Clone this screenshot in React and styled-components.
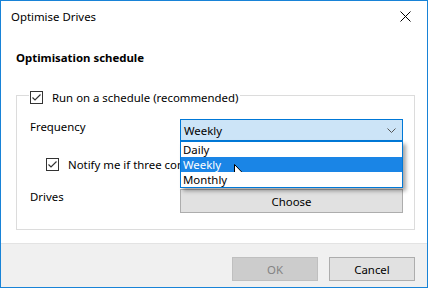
import React from 'react';
import styled, { createGlobalStyle } from 'styled-components';

const GlobalStyle = createGlobalStyle`
    html, body {
        margin: 0;
        padding: 0;
        background: #ffffff;
    }
    body {
        font-family: "Segoe UI", "Noto Sans", "Liberation Sans", sans-serif;
        font-size: 11.4px;
        color: #000000;
    }
`;

const Window = styled.div`
    box-sizing: border-box;
    width: 428px;
    height: 288px;
    border: 1px solid #1883d7;
    display: flex;
    flex-direction: column;
    background: #ffffff;
    overflow: hidden;
`;

const TitleBar = styled.div`
    height: 30px;
    display: flex;
    align-items: center;
    justify-content: space-between;
    padding: 0 16px 0 10px;
`;

const Title = styled.span`
    color: #000000;
`;

const CloseButton = styled.span`
    display: flex;
    align-items: center;
    justify-content: center;
    width: 12px;
    height: 12px;
`;

const Content = styled.div`
    flex: 1;
    padding: 19px 12px 0 15px;
`;

const Heading = styled.div`
    font-weight: bold;
    line-height: 16px;
    margin-bottom: 19px;
`;

const GroupBox = styled.fieldset`
    margin: 0;
    border: 1px solid #dcdcdc;
    padding: 0 11px 16px 13px;
`;

const Legend = styled.legend`
    padding: 4px 2px 0 1px;
    margin-left: -1px;
    line-height: 17px;
`;

const CheckLabel = styled.label`
    display: flex;
    align-items: center;
    gap: 9px;
    padding-left: ${p => p.indent || 0}px;
`;

const Box = styled.span`
    box-sizing: border-box;
    width: 13px;
    height: 13px;
    border: 1px solid #333333;
    background: #ffffff;
    display: flex;
    align-items: center;
    justify-content: center;
`;

const Row = styled.div`
    display: grid;
    grid-template-columns: 150px 1fr;
    align-items: center;
    margin-top: ${p => p.gap}px;
    height: ${p => p.h}px;
    position: relative;
`;

const Label = styled.span`
    line-height: 17px;
    margin-top: ${p => p.offset || 0}px;
`;

const Select = styled.div`
    box-sizing: border-box;
    height: 22px;
    border: 1px solid #0078d7;
    background: #cce4f7;
    display: flex;
    align-items: center;
    justify-content: space-between;
    padding: 0 6px 0 3px;
    position: relative;
`;

const Options = styled.ul`
    position: absolute;
    top: 21px;
    left: -1px;
    right: -1px;
    margin: 0;
    padding: 0;
    list-style: none;
    box-sizing: border-box;
    border: 1px solid #0078d7;
    background: #ffffff;
    box-shadow: 3px 3px 4px rgba(0, 0, 0, 0.35);
    z-index: 2;
`;

const Option = styled.li`
    height: 15px;
    line-height: 15px;
    padding-left: 2px;
    background: ${p => (p.selected ? '#1a85e6' : '#ffffff')};
    color: ${p => (p.selected ? '#ffffff' : '#000000')};
    position: relative;
`;

const Pointer = styled.svg`
    position: absolute;
    left: 53px;
    top: 7px;
`;

const Button = styled.button`
    box-sizing: border-box;
    font-family: inherit;
    font-size: 11.4px;
    height: 24px;
    width: ${p => (p.w ? `${p.w}px` : '100%')};
    border: 1px solid ${p => (p.disabled ? '#bfbfbf' : '#adadad')};
    background: ${p => (p.disabled ? '#cccccc' : '#e1e1e1')};
    color: ${p => (p.disabled ? '#838383' : '#000000')};
    padding: 0;
    margin: 0;
`;

const Footer = styled.div`
    box-sizing: border-box;
    height: 44px;
    flex-shrink: 0;
    border-top: 1px solid #e3e3e3;
    background: #f0f0f0;
    display: flex;
    justify-content: flex-end;
    align-items: flex-start;
    gap: 11px;
    padding: 13px 12px 0 0;
`;

const Check = () => (
    <svg width="11" height="11" viewBox="0 0 11 11">
        <path d="M1.5 5.5 L4 8 L9.5 2.5" fill="none" stroke="#333" strokeWidth="1.2" />
    </svg>
);

const App = () => (
    <>
        <GlobalStyle />
        <Window>
            <TitleBar>
                <Title>Optimise Drives</Title>
                <CloseButton>
                    <svg width="11" height="11" viewBox="0 0 11 11">
                        <path d="M0.5 0.5 L10.5 10.5 M10.5 0.5 L0.5 10.5" stroke="#000" strokeWidth="1" />
                    </svg>
                </CloseButton>
            </TitleBar>
            <Content>
                <Heading>Optimisation schedule</Heading>
                <GroupBox>
                    <Legend>
                        <CheckLabel>
                            <Box><Check /></Box>
                            Run on a schedule (recommended)
                        </CheckLabel>
                    </Legend>
                    <Row gap={13} h={22}>
                        <Label offset={-8}>Frequency</Label>
                        <Select>
                            <span>Weekly</span>
                            <svg width="9" height="5" viewBox="0 0 9 5">
                                <path d="M0.5 0.5 L4.5 4.5 L8.5 0.5" fill="none" stroke="#555" strokeWidth="1" />
                            </svg>
                            <Options>
                                <Option>Daily</Option>
                                <Option selected>
                                    Weekly
                                    <Pointer width="12" height="19" viewBox="0 0 12 19">
                                        <path d="M0.5 0.5 L0.5 16 L4.2 12.4 L6.8 18.2 L8.8 17.3 L6.3 11.6 L11.2 11.6 Z" fill="#fff" stroke="#000" strokeWidth="1" />
                                    </Pointer>
                                </Option>
                                <Option>Monthly</Option>
                            </Options>
                        </Select>
                    </Row>
                    <Row gap={13} h={20}>
                        <CheckLabel indent={16}>
                            <Box><Check /></Box>
                            <span style={{ whiteSpace: 'nowrap' }}>Notify me if three consecutive runs are missed</span>
                        </CheckLabel>
                    </Row>
                    <Row gap={15} h={24}>
                        <Label offset={-10}>Drives</Label>
                        <Button>Choose</Button>
                    </Row>
                </GroupBox>
            </Content>
            <Footer>
                <Button disabled w={86}>OK</Button>
                <Button w={86}>Cancel</Button>
            </Footer>
        </Window>
    </>
);

export default App;
